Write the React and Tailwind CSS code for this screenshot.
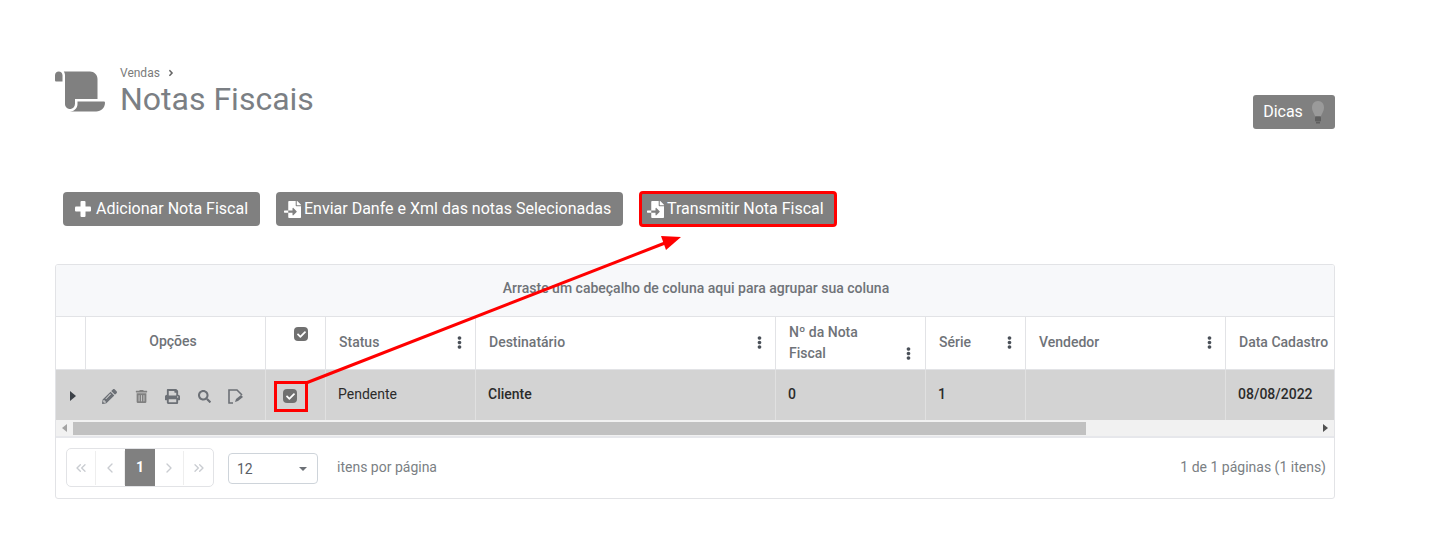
import { useState } from "react";
import {
  FaScroll,
  FaFileImport,
  FaPencilAlt,
  FaTrashAlt,
  FaPrint,
  FaSearch,
  FaCheck,
  FaEllipsisV,
  FaAngleRight as Chevron,
} from "react-icons/fa";
import { ChevronLeft, ChevronRight, ChevronsLeft, ChevronsRight } from "lucide-react";

const headCell = "flex items-center border-r border-[#e2e3e6] pl-[13px] pr-[9px] text-[14px] font-medium text-[#6f7378]";
const bodyCell = "flex items-center border-r border-[#e0e0e0] px-[12px] text-[14px] text-[#2b2b2b]";

function ColumnMenu() {
  return <FaEllipsisV className="text-[13px] text-[#4a5058]" />;
}

function CheckBox() {
  return (
    <span className="flex h-[14px] w-[14px] items-center justify-center rounded-[4px] bg-[#707070]">
      <FaCheck className="text-[9px] text-white" />
    </span>
  );
}

function ActionButton({ icon, label, className = "" }) {
  return (
    <button
      className={
        "flex h-[34px] items-center gap-[3px] rounded-[4px] bg-[#808080] text-[16px] text-white " +
        className
      }
    >
      {icon}
      {label}
    </button>
  );
}

function PlusIcon() {
  return (
    <svg className="mr-[2px]" width="16" height="16" viewBox="0 0 16 16" fill="#ffffff">
      <rect x="5.5" y="0" width="5" height="16" rx="1" />
      <rect x="0" y="5.5" width="16" height="5" rx="1" />
    </svg>
  );
}

function EditDocIcon() {
  return (
    <svg width="16" height="15" viewBox="0 0 16 15" fill="none" stroke="#6c7076" strokeWidth="1.6">
      <path d="M5 14H1V1h8l5 5" />
      <path d="M7 13l1-3 5-4 2 2-5 4z" fill="#6c7076" stroke="none" />
    </svg>
  );
}

function BulbIcon() {
  return (
    <svg width="14" height="23" viewBox="0 0 14 23">
      <path d="M7 0C3 0 1 3 1 7c0 3 2 5 3 8h6c1-3 3-5 3-8 0-4-2-7-6-7z" fill="#9a9a9a" />
      <rect x="4" y="15.5" width="6" height="5" rx="1" fill="#5f5f5f" />
      <rect x="5" y="21" width="4" height="1.5" fill="#5f5f5f" />
    </svg>
  );
}

function PagerButton({ children, last }) {
  return (
    <span
      className={
        "flex h-[34px] w-[29px] items-center justify-center text-[#c9ccd1] " +
        (last ? "" : "border-r border-[#eeeeee]")
      }
    >
      {children}
    </span>
  );
}

export default function App() {
  const [perPage] = useState(12);

  return (
    <div className="relative h-[541px] w-[1445px] overflow-hidden bg-white font-['Roboto',sans-serif]">
      <div className="ml-[55px] w-[1280px] pt-[66px]">
        {/* page title */}
        <div className="flex items-start justify-between">
          <div className="flex items-start gap-[15px]">
            <FaScroll className="mt-[5px] h-[41px] w-[50px] text-[#808080]" />
            <div>
              <div className="flex h-[14px] items-center gap-[6px] text-[12px] text-[#7b7b7b]">
                Vendas <Chevron className="text-[10px] text-[#666666]" />
              </div>
              <h1 className="text-[32px] leading-[38px] text-[#7b7f84]">Notas Fiscais</h1>
            </div>
          </div>
          <button className="mt-[29px] flex h-[34px] w-[82px] items-center justify-center gap-[8px] rounded-[3px] bg-[#808080] text-[16px] text-white">
            Dicas
            <BulbIcon />
          </button>
        </div>

        {/* actions */}
        <div className="mt-[62px] flex items-center pl-[8px]">
          <ActionButton
            className="w-[197px] pl-[12px]"
            icon={<PlusIcon />}
            label="Adicionar Nota Fiscal"
          />
          <ActionButton
            className="ml-[16px] w-[347px] pl-[8px]"
            icon={<FaFileImport className="text-[17px]" />}
            label="Enviar Danfe e Xml das notas Selecionadas"
          />
          <ActionButton
            className="ml-[16px] h-[36px] w-[198px] rounded-[1px] border-[3px] border-[#ff0000] pl-[5px]"
            icon={<FaFileImport className="text-[17px]" />}
            label="Transmitir Nota Fiscal"
          />
        </div>

        {/* grid */}
        <div className="mt-[37px] h-[235px] overflow-hidden rounded-[3px] border border-[#e2e3e6]">
          <div className="flex h-[52px] items-center justify-center border-b border-[#e2e3e6] bg-[#f7f8fa] pb-[4px] pl-[2px] text-[14px] font-medium text-[#6f7378]">
            Arraste um cabeçalho de coluna aqui para agrupar sua coluna
          </div>

          <div className="grid h-[53px] grid-cols-[30px_180px_60px_150px_300px_150px_100px_200px_108px] border-b border-[#e2e3e6]">
            <div className={headCell} />
            <div className={headCell + " justify-center !pl-0 !pr-[5px] pb-[4px]"}>Opções</div>
            <div className={headCell + " justify-end !pl-0 !pr-[17px] pb-[18px]"}>
              <CheckBox />
            </div>
            <div className={headCell + " justify-between pb-[2px]"}>
              Status <ColumnMenu />
            </div>
            <div className={headCell + " justify-between pb-[2px]"}>
              Destinatário <ColumnMenu />
            </div>
            <div className={headCell + " relative leading-[21px]"}>
              <span className="w-[100px]">Nº da Nota Fiscal</span>
              <span className="absolute bottom-[9px] right-[10px]">
                <ColumnMenu />
              </span>
            </div>
            <div className={headCell + " justify-between pb-[2px]"}>
              Série <ColumnMenu />
            </div>
            <div className={headCell + " justify-between pb-[2px]"}>
              Vendedor <ColumnMenu />
            </div>
            <div className="flex items-center whitespace-nowrap pb-[2px] pl-[13px] text-[14px] font-medium text-[#6f7378]">
              Data Cadastro
            </div>
          </div>

          <div className="grid h-[50px] grid-cols-[30px_180px_60px_150px_300px_150px_100px_200px_108px] bg-[#d3d3d3]">
            <div className="flex items-center pl-[14px] pt-[2px]">
              <span className="h-0 w-0 border-y-[5px] border-l-[6px] border-y-transparent border-l-[#3c4148]" />
            </div>
            <div className={bodyCell + " gap-[17.5px] pl-[16px] pt-[2px]"}>
              <FaPencilAlt className="text-[15px] text-[#6c7076]" />
              <FaTrashAlt className="text-[13px] text-[#808080]" />
              <FaPrint className="text-[15px] text-[#6c7076]" />
              <FaSearch className="text-[13px] text-[#6c7076]" />
              <EditDocIcon />
            </div>
            <div className={bodyCell + " justify-start !pl-[17px] pt-[2px]"}>
              <CheckBox />
            </div>
            <div className={bodyCell + " pb-[2px]"}>Pendente</div>
            <div className={bodyCell + " pb-[2px] font-medium"}>Cliente</div>
            <div className={bodyCell + " pb-[2px] font-medium"}>0</div>
            <div className={bodyCell + " pb-[2px] font-medium"}>1</div>
            <div className={bodyCell} />
            <div className="flex items-center pb-[2px] pl-[12px] text-[14px] font-medium text-[#2b2b2b]">08/08/2022</div>
          </div>

          {/* horizontal scrollbar */}
          <div className="flex h-[18px] items-center border-b-2 border-[#e6e7eb] bg-[#f1f1f1]">
            <span className="ml-[6px] h-0 w-0 border-y-[4px] border-r-[5px] border-y-transparent border-r-[#a3a3a3]" />
            <span className="ml-[6px] h-[13px] w-[1013px] bg-[#c1c1c1]" />
            <span className="ml-auto mr-[6px] h-0 w-0 border-y-[4px] border-l-[5px] border-y-transparent border-l-[#505050]" />
          </div>

          {/* pagination */}
          <div className="flex h-[61px] items-center pb-[2px] pl-[10px] pr-[8px]">
            <div className="flex h-[39px] w-[148px] items-center overflow-hidden rounded-[5px] border border-[#e2e3e6]">
              <PagerButton>
                <ChevronsLeft size={16} strokeWidth={2} />
              </PagerButton>
              <PagerButton>
                <ChevronLeft size={16} strokeWidth={2} />
              </PagerButton>
              <span className="flex h-full w-[30px] items-center justify-center bg-[#808080] text-[14px] font-bold text-white">
                1
              </span>
              <PagerButton>
                <ChevronRight size={16} strokeWidth={2} />
              </PagerButton>
              <PagerButton last>
                <ChevronsRight size={16} strokeWidth={2} />
              </PagerButton>
            </div>
            <div className="ml-[14px] mt-[2px] flex h-[31px] w-[90px] items-center justify-between rounded-[4px] border border-[#ced4da] pl-[8px] pr-[9px] pt-[1px] text-[14px] text-[#5b6066]">
              {perPage}
              <span className="mr-[1px] h-0 w-0 border-x-[4px] border-t-[4px] border-x-transparent border-t-[#6c7076]" />
            </div>
            <span className="ml-[19px] text-[14px] text-[#7b7f84]">itens por página</span>
            <span className="ml-auto text-[14px] text-[#7b7f84]">1 de 1 páginas (1 itens)</span>
          </div>
        </div>
      </div>

      {/* annotation drawn over the grid */}
      <div className="absolute left-[274px] top-[381px] h-[31px] w-[34px] border-[3px] border-[#ff0000]" />
      <svg className="pointer-events-none absolute left-0 top-0" width="1445" height="541">
        <line x1="306" y1="383" x2="665" y2="243" stroke="#ff0000" strokeWidth="3" />
        <polygon points="681,237 661,236 666,250" fill="#ff0000" />
      </svg>
    </div>
  );
}
